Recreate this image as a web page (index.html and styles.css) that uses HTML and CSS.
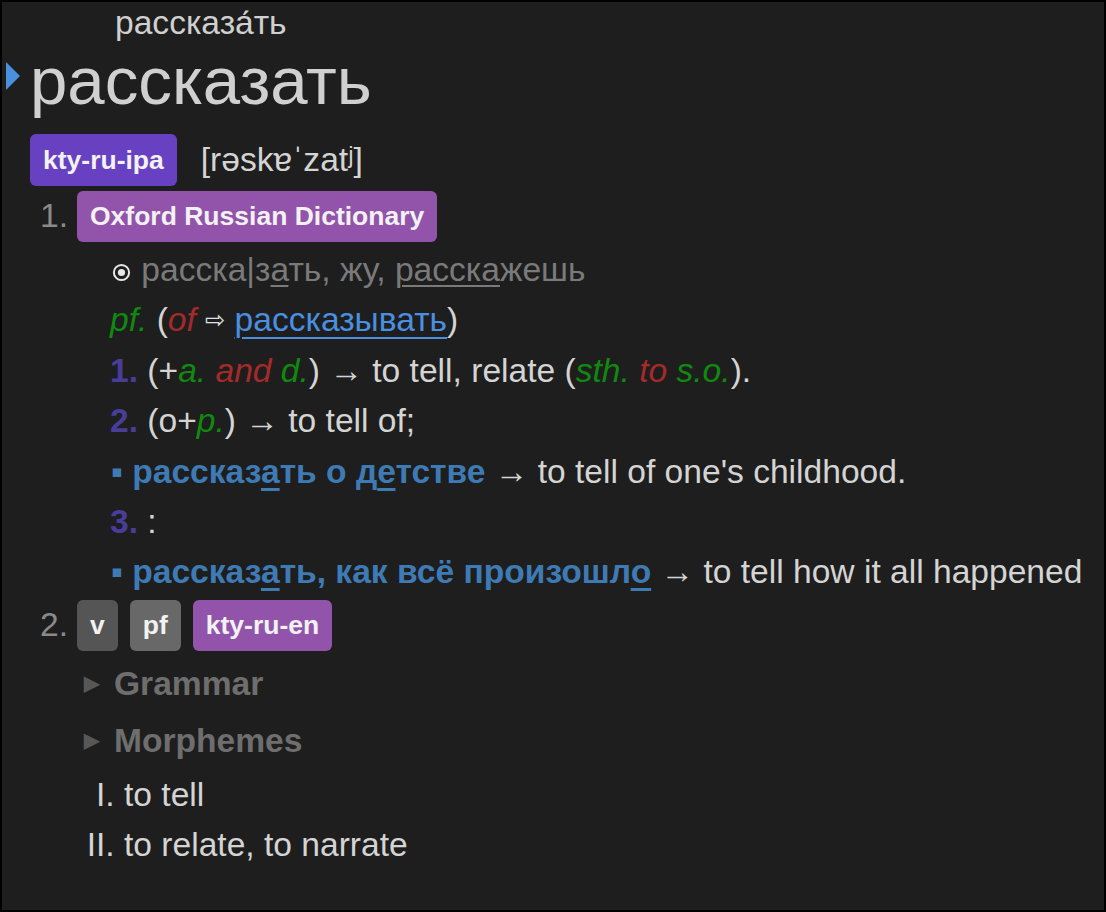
FILE: index.html
```html
<!DOCTYPE html>
<html lang="ru">
<head>
<meta charset="utf-8">
<link rel="stylesheet" href="styles.css">
</head>
<body>
<div class="frame">
  <div class="reading">рассказа́ть</div>
  <div class="head-row">
    <svg class="head-tri" width="14" height="28" viewBox="0 0 14 28"><path d="M0 0 L14 14 L0 28 Z" fill="#4a8fe0"/></svg>
    <div class="headword">рассказать</div>
  </div>
  <div class="ipa-row">
    <span class="badge b-ipa">kty-ru-ipa</span>
    <span class="ipa">[rəskɐˈzatʲ]</span>
  </div>
  <div class="num-row">
    <span class="num">1.</span>
    <span class="badge b-dict">Oxford Russian Dictionary</span>
  </div>
  <div class="sense">
    <div class="line forms"><svg class="dot" width="19" height="19" viewBox="0 0 19 19"><circle cx="9.5" cy="9.5" r="7.6" fill="none" stroke="#e8e8e8" stroke-width="2"/><circle cx="9.5" cy="9.5" r="3.6" fill="#e8e8e8"/></svg> расска|з<u>а</u>ть, жу, <u>расска</u>жешь</div>
    <div class="line"><i class="g">pf.</i> (<i class="r">of</i> <span class="xref">⇨</span> <a class="link">рассказывать</a>)</div>
    <div class="line"><b class="sn">1.</b> (+<i class="g">a.</i><i class="r"> and </i><i class="g">d.</i>) <span class="arr">→</span> to tell, relate (<i class="g">sth.</i><i class="r"> to </i><i class="g">s.o.</i>).</div>
    <div class="line"><b class="sn">2.</b> (о+<i class="g">p.</i>) <span class="arr">→</span> to tell of;</div>
    <div class="line"><span class="sq">▪</span> <b class="ex">рассказ<u>а</u>ть о д<u>е</u>тстве</b> <span class="arr">→</span> to tell of one's childhood.</div>
    <div class="line"><b class="sn">3.</b> :</div>
    <div class="line"><span class="sq">▪</span> <b class="ex">рассказ<u>а</u>ть, как всё произошл<u>о</u></b> <span class="arr">→</span> to tell how it all happened</div>
  </div>
  <div class="num-row num-row2">
    <span class="num">2.</span>
    <span class="badge b-v">v</span>
    <span class="badge b-pf">pf</span>
    <span class="badge b-dict">kty-ru-en</span>
  </div>
  <div class="details">
    <div class="summary"><span class="tri">▶</span>Grammar</div>
    <div class="summary"><span class="tri">▶</span>Morphemes</div>
  </div>
  <ol class="glosses">
    <li>to tell</li>
    <li>to relate, to narrate</li>
  </ol>
</div>
</body>
</html>
```

FILE: styles.css
```css
html, body {
  margin: 0;
  padding: 0;
  background: #000;
}
.frame {
  box-sizing: border-box;
  width: 1106px;
  height: 912px;
  border: 2px solid #000;
  background: #1e1e1e;
  color: #d4d4d4;
  font-family: "Liberation Sans", Arial, sans-serif;
  font-size: 33.6px;
  line-height: 1.5;
  overflow: hidden;
}
.reading {
  height: 42px;
  line-height: 42px;
  font-size: 33.6px;
  padding-left: 113px;
  color: #d0d0d0;
}
.head-row {
  display: flex;
  align-items: center;
}
.head-tri {
  margin-left: 4px;
  margin-right: 10px;
  margin-top: -10px;
}
.headword {
  font-size: 67.2px;
  line-height: 74px;
  color: #d0d0d0;
}
.ipa-row {
  display: flex;
  align-items: center;
  margin-top: 16px;
  padding-left: 28px;
  height: 52px;
}
.ipa {
  margin-left: 24px;
  color: #d4d4d4;
}
.badge {
  display: inline-flex;
  align-items: center;
  height: 52px;
  padding: 0 13px;
  border-radius: 6px;
  color: #f2f2f2;
  font-weight: bold;
  font-size: 26.5px;
  line-height: 1;
  box-sizing: border-box;
}
.b-ipa { background: #6741c1; }
.b-dict { background: #9254ab; }
.b-v { background: #555555; }
.b-pf { background: #686868; }
.num-row {
  display: flex;
  align-items: center;
  gap: 12px;
  margin-top: 5px;
  height: 51px;
  padding-left: 38px;
}
.num-row .badge { height: 51px; }
.num {
  color: #8a8a8a;
  width: 25px;
}
.sense {
  margin-top: 3px;
  padding-left: 108px;
}
.line {
  height: 50.4px;
  white-space: nowrap;
}
.forms { color: #7a7a7a; }
.forms u { text-decoration-thickness: 2px; text-underline-offset: 4px; }
.dot { vertical-align: -1px; margin-left: 2px; margin-right: 1px; }
.g { color: #0f8a0f; }
.r { color: #a52a2a; }
.xref { font-size: 24px; color: #e0e0e0; vertical-align: 3px; }
.link {
  color: #4a8fe0;
  text-decoration: underline;
  text-decoration-thickness: 2px;
  text-underline-offset: 6px;
}
.sn { color: #483d99; }
.arr { font-size: 33.6px; }
.sq { color: #3e7bb5; font-size: 33.6px; margin-left: 1px; }
.ex { color: #3e7bb5; }
.ex u { text-decoration-thickness: 3px; text-underline-offset: 5px; }
.num-row2 { margin-top: 2px; }
.details {
  margin-top: 8px;
  padding-left: 79px;
}
.summary {
  height: 50.4px;
  font-weight: bold;
  color: #6e6e6e;
  margin-bottom: 7px;
}
.tri {
  display: inline-block;
  width: 30px;
  font-size: 20px;
  color: #575757;
  vertical-align: 5px;
  margin-left: 3px;
}
.glosses {
  list-style: upper-roman;
  margin: -4px 0 0 0;
  padding-left: 122px;
}
.glosses li {
  height: 50.4px;
  padding-left: 0;
}
```
